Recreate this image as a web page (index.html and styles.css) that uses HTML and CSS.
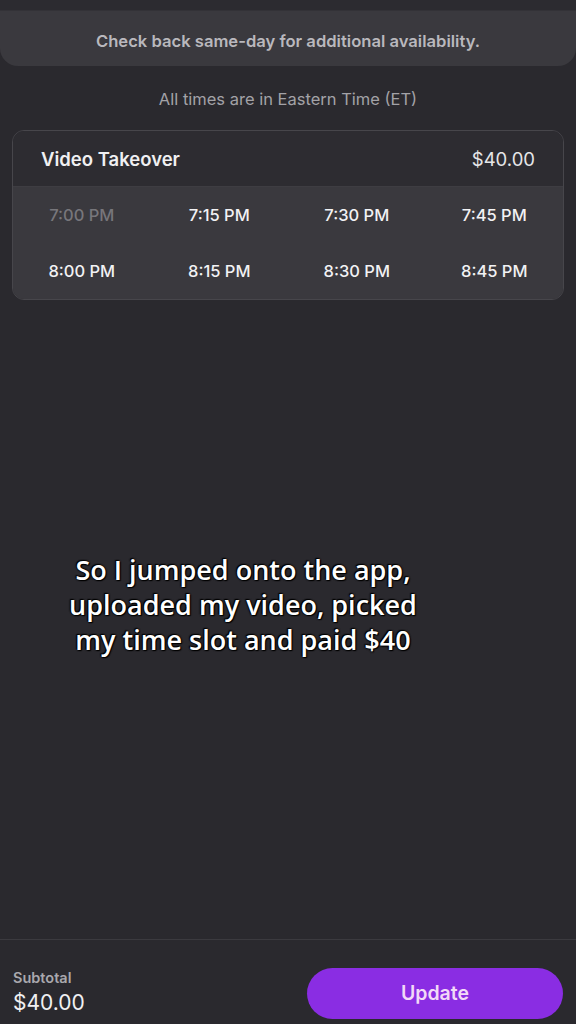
FILE: index.html
```html
<!DOCTYPE html>
<html>
<head>
<meta charset="utf-8">
<link rel="stylesheet" href="styles.css">
</head>
<body>
<div class="page">
  <div class="topline"></div>
  <div class="notice">Check back same-day for additional availability.</div>
  <div class="tz">All times are in Eastern Time (ET)</div>
  <div class="card">
    <div class="card-head">
      <span class="title">Video Takeover</span>
      <span class="price">$40.00</span>
    </div>
    <div class="slots">
      <span class="slot disabled">7:00 PM</span>
      <span class="slot">7:15 PM</span>
      <span class="slot">7:30 PM</span>
      <span class="slot">7:45 PM</span>
      <span class="slot">8:00 PM</span>
      <span class="slot">8:15 PM</span>
      <span class="slot">8:30 PM</span>
      <span class="slot">8:45 PM</span>
    </div>
  </div>
  <div class="spacer">
    <p class="caption">So I jumped onto the app,<br>uploaded my video, picked<br>my time slot and paid $40</p>
  </div>
  <div class="footer">
    <div class="sub">
      <span class="sub-label">Subtotal</span>
      <span class="sub-value">$40.00</span>
    </div>
    <button class="update">Update</button>
  </div>
</div>
</body>
</html>
```
FILE: styles.css
```css
* { box-sizing: border-box; }
html, body { margin: 0; padding: 0; }
body {
  background: #2a292e;
  font-family: Inter, "Liberation Sans", sans-serif;
  color: #ececee;
}
.page {
  width: 576px;
  height: 1024px;
  display: flex;
  flex-direction: column;
  overflow: hidden;
}
.topline {
  height: 11px;
  background: #2c2b30;
  border-bottom: 1px solid #333237;
}
.notice {
  height: 55px;
  background: #3a393e;
  border-radius: 0 0 18px 18px;
  display: flex;
  align-items: center;
  justify-content: center;
  font-size: 16.6px;
  font-weight: 600;
  color: #b9b8bd;
  padding-top: 5px;
}
.tz {
  margin-top: 22px;
  text-align: center;
  font-size: 16.5px;
  color: #a3a2a7;
  height: 22px;
  line-height: 22px;
}
.card {
  margin: 20px 12px 0;
  border: 1px solid #47464b;
  border-radius: 12px;
  overflow: hidden;
}
.card-head {
  height: 56px;
  background: #2d2c31;
  display: flex;
  align-items: center;
  justify-content: space-between;
  padding: 0 28px 0 28px;
  border-bottom: 1px solid #3e3d42;
}
.title { font-size: 18.5px; font-weight: 600; color: #f0f0f2; }
.price { font-size: 18.5px; color: #e6e6e8; }
.slots {
  background: #3a393e;
  display: grid;
  grid-template-columns: repeat(4, 1fr);
  grid-auto-rows: 56px;
  padding: 0;
}
.slot {
  display: flex;
  align-items: center;
  justify-content: center;
  font-size: 16.5px;
  font-weight: 500;
  color: #f2f2f4;
}
.slot.disabled { color: #77767b; }
.spacer {
  flex: 1;
  display: flex;
  align-items: flex-start;
}
.caption {
  margin: 252px 0 0 0;
  width: 486px;
  text-align: center;
  font-family: "Open Sans", sans-serif;
  font-weight: 600;
  font-size: 27px;
  line-height: 35px;
  color: #ffffff;
  text-shadow: 0 0 2px #000, 0 0 2px #000, 1px 1px 1px #000, -1px -1px 1px #000;
}
.footer {
  height: 85px;
  border-top: 1px solid #3b3a3f;
  background: #2a292e;
  display: flex;
  align-items: center;
  justify-content: space-between;
  padding: 0 13px 0 13px;
}
.sub {
  display: flex;
  flex-direction: column;
  padding-top: 22px;
}
.sub-label { font-size: 14.5px; font-weight: 600; color: #a9a8ad; line-height: 18px; }
.sub-value { font-size: 21px; color: #f0f0f2; line-height: 28px; margin-top: 2px; }
.update {
  width: 256px;
  height: 51px;
  margin-top: 22px;
  border: none;
  border-radius: 26px;
  background: #8a2de3;
  color: #f2d9f7;
  font-family: Inter, "Liberation Sans", sans-serif;
  font-size: 19.5px;
  font-weight: 600;
}
```
